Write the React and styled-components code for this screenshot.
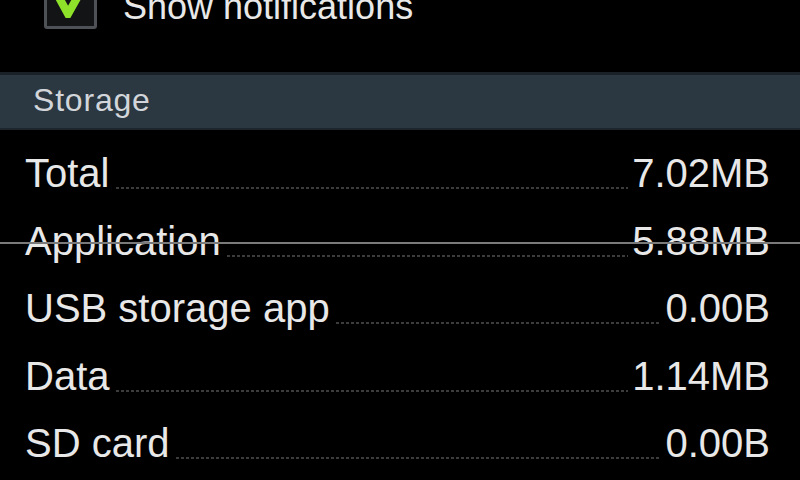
import React from "react";
import styled, { createGlobalStyle } from "styled-components";

const rows = [
  { label: "Total", value: "7.02MB" },
  { label: "Application", value: "5.88MB" },
  { label: "USB storage app", value: "0.00B" },
  { label: "Data", value: "1.14MB" },
  { label: "SD card", value: "0.00B" },
];

const App = () => {
  return (
    <Screen>
      <GlobalStyle />
      <NotifyRow>
        <Checkbox>
          <svg width="34" height="30" viewBox="0 0 34 30">
            <path d="M2 4 L14 26 L32 -6" fill="none" stroke="#8fe22a" strokeWidth="8" strokeLinejoin="miter" />
          </svg>
        </Checkbox>
        <NotifyText>Show notifications</NotifyText>
      </NotifyRow>
      <SectionHeader>Storage</SectionHeader>
      <List>
        {rows.map((row) => (
          <Row key={row.label}>
            <Label>{row.label}</Label>
            <Leader />
            <Value>{row.value}</Value>
          </Row>
        ))}
      </List>
      <GlitchLine />
    </Screen>
  );
};

const GlobalStyle = createGlobalStyle`
  html, body {
    margin: 0;
    padding: 0;
    background: #000;
    overflow: hidden;
  }
`;

const Screen = styled.div`
  position: relative;
  width: 800px;
  height: 480px;
  overflow: hidden;
  background: #000;
  color: #e6e6e6;
  font-family: "Liberation Sans", Arial, sans-serif;
  display: flex;
  flex-direction: column;
`;

const NotifyRow = styled.div`
  display: flex;
  align-items: flex-end;
  height: 52px;
  margin-top: -23px;
  padding-left: 44px;
  gap: 26px;
  flex-shrink: 0;
`;

const Checkbox = styled.div`
  box-sizing: border-box;
  width: 53px;
  height: 52px;
  border: 3px solid #4e5256;
  border-radius: 3px;
  background: #121416;
  display: flex;
  justify-content: center;
  align-items: flex-start;
  overflow: hidden;
  padding-top: 8px;
  svg {
    display: block;
  }
`;

const NotifyText = styled.div`
  font-size: 36px;
  line-height: 36px;
  margin-bottom: 4px;
  color: #e8e8e8;
`;

const SectionHeader = styled.div`
  margin-top: 43px;
  height: 58px;
  border-top: 3px solid #1a2228;
  border-bottom: 2px solid #1d262d;
  background: #2b3741;
  color: #d2d6da;
  font-size: 32px;
  letter-spacing: 0.8px;
  padding-left: 33px;
  display: flex;
  align-items: center;
  padding-bottom: 2px;
  box-sizing: border-box;
  flex-shrink: 0;
`;

const List = styled.div`
  padding-top: 10px;
  display: flex;
  flex-direction: column;
`;

const Row = styled.div`
  display: flex;
  align-items: baseline;
  height: 67.5px;
  line-height: 67.5px;
  font-size: 40px;
  padding: 0 30px 0 25px;
`;

const Label = styled.span`
  color: #e8e8e8;
  white-space: nowrap;
`;

const Leader = styled.span`
  flex: 1;
  height: 2px;
  margin: 0 4px 0 6px;
  transform: translateY(2px);
  background-image: repeating-linear-gradient(
    to right,
    #3c3c3c 0,
    #3c3c3c 3px,
    transparent 3px,
    transparent 5px
  );
`;

const Value = styled.span`
  color: #e8e8e8;
  white-space: nowrap;
`;

const GlitchLine = styled.div`
  position: absolute;
  left: 0;
  right: 0;
  top: 242px;
  height: 2px;
  background: #7a7a7a;
`;

export default App;
